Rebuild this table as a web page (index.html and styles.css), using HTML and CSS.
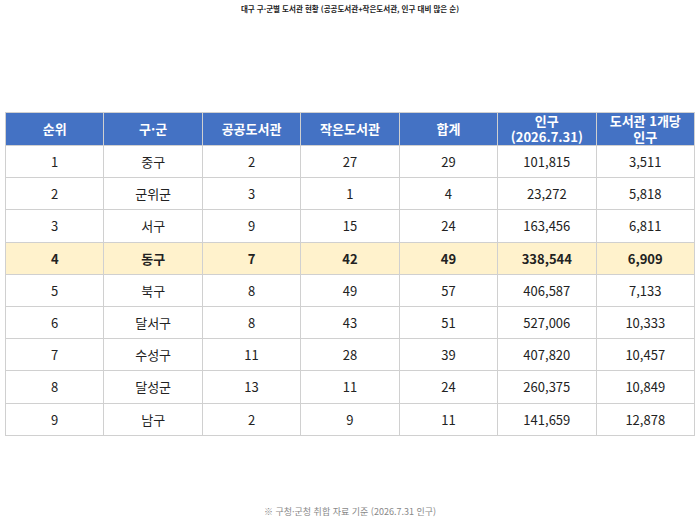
FILE: index.html
```html
<!DOCTYPE html>
<html lang="ko">
<head>
<meta charset="utf-8">
<link rel="stylesheet" href="styles.css">
</head>
<body>
<div class="page">
  <h1 class="title">대구 구·군별 도서관 현황 (공공도서관+작은도서관, 인구 대비 많은 순)</h1>
  <table class="tbl">
    <thead>
      <tr><th>순위</th><th>구·군</th><th>공공도서관</th><th>작은도서관</th><th>합계</th><th><span class="ln">인구</span><span class="ln">(2026.7.31)</span></th><th><span class="ln">도서관 1개당</span><span class="ln">인구</span></th></tr>
    </thead>
    <tbody>
      <tr><td>1</td><td>중구</td><td>2</td><td>27</td><td>29</td><td>101,815</td><td>3,511</td></tr>
      <tr><td>2</td><td>군위군</td><td>3</td><td>1</td><td>4</td><td>23,272</td><td>5,818</td></tr>
      <tr><td>3</td><td>서구</td><td>9</td><td>15</td><td>24</td><td>163,456</td><td>6,811</td></tr>
      <tr class="hl"><td>4</td><td>동구</td><td>7</td><td>42</td><td>49</td><td>338,544</td><td>6,909</td></tr>
      <tr><td>5</td><td>북구</td><td>8</td><td>49</td><td>57</td><td>406,587</td><td>7,133</td></tr>
      <tr><td>6</td><td>달서구</td><td>8</td><td>43</td><td>51</td><td>527,006</td><td>10,333</td></tr>
      <tr><td>7</td><td>수성구</td><td>11</td><td>28</td><td>39</td><td>407,820</td><td>10,457</td></tr>
      <tr><td>8</td><td>달성군</td><td>13</td><td>11</td><td>24</td><td>260,375</td><td>10,849</td></tr>
      <tr><td>9</td><td>남구</td><td>2</td><td>9</td><td>11</td><td>141,659</td><td>12,878</td></tr>
    </tbody>
  </table>
  <p class="note">※ 구청·군청 취합 자료 기준 (2026.7.31 인구)</p>
</div>
</body>
</html>
```
FILE: styles.css
```css
html, body {
  margin: 0;
  padding: 0;
  background: #ffffff;
}
body {
  font-family: "Noto Sans CJK KR", "Noto Sans", sans-serif;
  color: #222;
}
.page {
  height: 523px;
  display: flex;
  flex-direction: column;
  align-items: center;
  padding: 0 5px;
  box-sizing: border-box;
}
.title {
  margin: 3px 0 0;
  font-size: 7.5px;
  font-weight: 700;
  line-height: 12px;
  color: #222;
}
.tbl {
  margin-top: 97px;
  width: 100%;
  border-collapse: collapse;
  table-layout: fixed;
  font-size: 13px;
}
.tbl th, .tbl td {
  border: 1px solid #d0d0d0;
  text-align: center;
  padding: 0;
}
.tbl th {
  background: #4472c4;
  color: #ffffff;
  font-weight: 700;
  height: 32px;
  line-height: 16px;
}
.ln {
  display: block;
  height: 16px;
  line-height: 16px;
}
.tbl td {
  height: 31.2px;
  color: #222;
}
.tbl tr.hl td {
  background: #fff2cc;
  font-weight: 700;
}
.note {
  margin: auto 0 5px;
  font-size: 9px;
  line-height: 12px;
  color: #888;
}
```
